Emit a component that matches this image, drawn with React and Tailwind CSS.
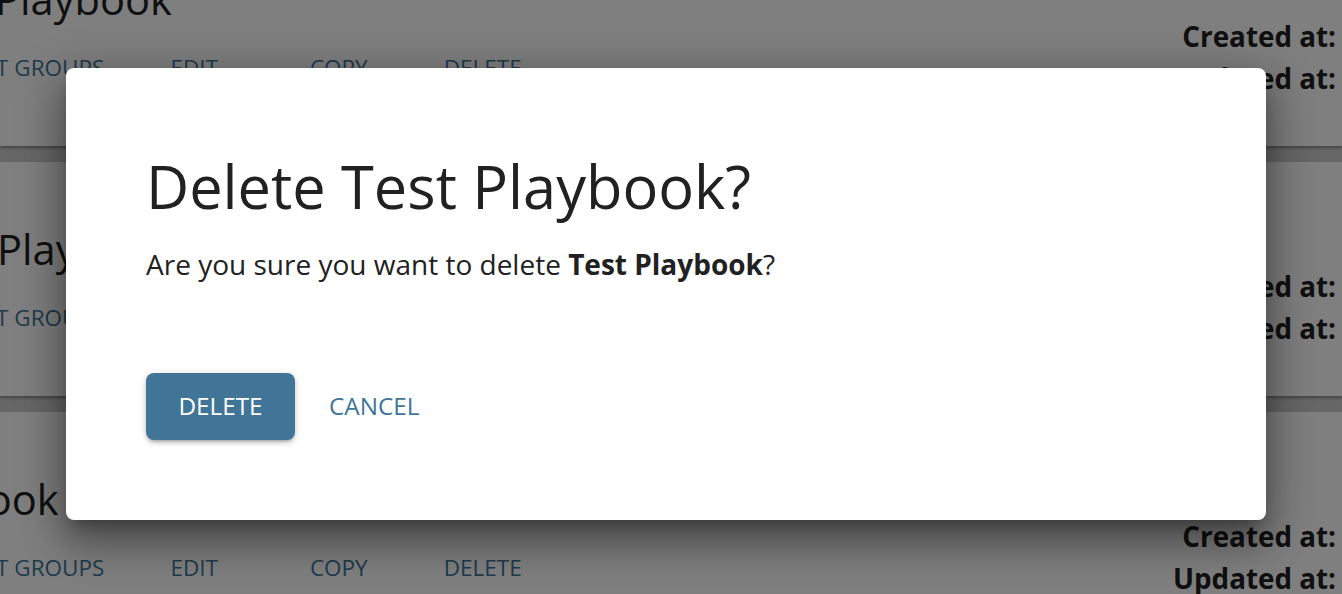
const font = { fontFamily: '"Open Sans", "Noto Sans", sans-serif' };

function Card({ title, titleClass }) {
  return (
    <div className="flex h-[234px] shrink-0 justify-between overflow-hidden bg-white pr-1.5 shadow-[0_2px_3px_rgba(0,0,0,0.35)]">
      <div className="pt-[59px]">
        <h2 className={`whitespace-nowrap text-[41.6px] leading-[56px] text-[#212121] ${titleClass}`}>{title}</h2>
        <div className="ml-[-39px] mt-[26px] flex text-[22.5px] leading-[30px] text-[#41769a]">
          <span className="whitespace-nowrap">EDIT GROUPS</span>
          <span className="ml-[66px]">EDIT</span>
          <span className="ml-[92px]">COPY</span>
          <span className="ml-[76px]">DELETE</span>
        </div>
      </div>
      <div className="flex flex-col items-end pt-[103px] text-[27.8px] font-bold leading-[42px] text-[#212121]">
        <span>Created at:</span>
        <span>Updated at:</span>
      </div>
    </div>
  );
}

export default function App() {
  return (
    <div style={font} className="relative h-[594px] w-[1342px] overflow-hidden bg-[#cfcfcf]">
      <div className="mt-[-88px] flex flex-col gap-4">
        <Card title="Playbook" titleClass="ml-[-5px]" />
        <Card title="Playbook" titleClass="ml-[-3px]" />
        <Card title="Test Playbook" titleClass="ml-[-210px]" />
      </div>
      <div className="absolute inset-0 flex items-center justify-center bg-black/50 pb-[6px] pr-[10px]">
        <div className="h-[452px] w-[1200px] rounded-lg bg-white px-20 pt-[78px] shadow-[0_11px_15px_-7px_rgba(0,0,0,0.3),0_24px_38px_3px_rgba(0,0,0,0.26),0_9px_46px_8px_rgba(0,0,0,0.2)]">
          <h1 className="text-[59.5px] leading-[80px] text-[#212121]">Delete Test Playbook?</h1>
          <p className="mt-[19px] text-[28px] leading-[38px] text-[#212121]">
            Are you sure you want to delete <strong className="font-bold">Test Playbook</strong>?
          </p>
          <div className="mt-[90px] flex items-center gap-[34px]">
            <button className="h-[67px] w-[149px] rounded-lg bg-[#417598] text-[24.3px] text-white shadow-[0_3px_3px_-2px_rgba(0,0,0,0.2),0_3px_4px_rgba(0,0,0,0.14),0_1px_8px_rgba(0,0,0,0.12)]">DELETE</button>
            <button className="text-[24.3px] text-[#417598]">CANCEL</button>
          </div>
        </div>
      </div>
    </div>
  );
}
